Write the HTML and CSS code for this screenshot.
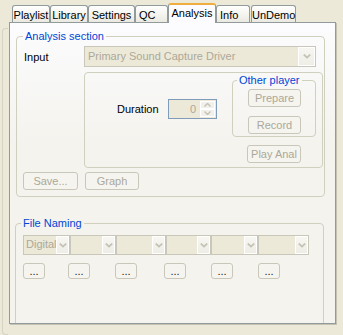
FILE: index.html
```html
<!DOCTYPE html>
<html lang="en">
<head>
<meta charset="utf-8">
<title>Analysis</title>
<link rel="stylesheet" href="styles.css">
</head>
<body>
<div class="window">
  <div class="tabs">
    <div class="tab tab-playlist">Playlist</div>
    <div class="tab tab-library">Library</div>
    <div class="tab tab-settings">Settings</div>
    <div class="tab tab-qc">QC</div>
    <div class="tab tab-analysis active">Analysis</div>
    <div class="tab tab-info">Info</div>
    <div class="tab tab-undemo">UnDemo</div>
  </div>
  <div class="panel">
    <fieldset class="group analysis">
      <legend>Analysis section</legend>
      <div class="input-row">
        <span class="input-label">Input</span>
        <div class="combo combo-input">
          <span class="combo-text">Primary Sound Capture Driver</span>
          <span class="drop drop-big"><svg width="8" height="5" viewBox="0 0 8 5"><path d="M0.8 0.6 L4 3.6 L7.2 0.6" fill="none" stroke="#c4c2b4" stroke-width="1.8"/></svg></span>
        </div>
      </div>
      <div class="inner-box">
        <div class="duration">
          <span class="duration-label">Duration</span>
          <div class="spin">
            <span class="spin-value">0</span>
            <span class="spin-buttons">
              <span class="spin-btn"><svg width="7" height="4" viewBox="0 0 7 4"><path d="M0.5 3.5 L3.5 0.5 L6.5 3.5" fill="none" stroke="#c4c2b4" stroke-width="1.4"/></svg></span>
              <span class="spin-btn"><svg width="7" height="4" viewBox="0 0 7 4"><path d="M0.5 0.5 L3.5 3.5 L6.5 0.5" fill="none" stroke="#c4c2b4" stroke-width="1.4"/></svg></span>
            </span>
          </div>
        </div>
        <div class="player-col">
          <fieldset class="group other">
            <legend>Other player</legend>
            <button class="btn btn-player btn-prepare" disabled>Prepare</button>
            <button class="btn btn-player btn-record" disabled>Record</button>
          </fieldset>
          <button class="btn btn-play" disabled>Play Anal</button>
        </div>
      </div>
      <div class="action-row">
        <button class="btn btn-save" disabled>Save...</button>
        <button class="btn btn-graph" disabled>Graph</button>
      </div>
    </fieldset>
    <fieldset class="group naming">
      <legend>File Naming</legend>
      <div class="naming-combos">
        <div class="combo combo-small"><span class="combo-text">Digital</span><span class="drop drop-small"><svg width="8" height="5" viewBox="0 0 8 5"><path d="M0.8 0.6 L4 3.6 L7.2 0.6" fill="none" stroke="#c4c2b4" stroke-width="1.8"/></svg></span></div>
        <div class="combo combo-small"><span class="combo-text"></span><span class="drop drop-small"><svg width="8" height="5" viewBox="0 0 8 5"><path d="M0.8 0.6 L4 3.6 L7.2 0.6" fill="none" stroke="#c4c2b4" stroke-width="1.8"/></svg></span></div>
        <div class="combo combo-small"><span class="combo-text"></span><span class="drop drop-small"><svg width="8" height="5" viewBox="0 0 8 5"><path d="M0.8 0.6 L4 3.6 L7.2 0.6" fill="none" stroke="#c4c2b4" stroke-width="1.8"/></svg></span></div>
        <div class="combo combo-small"><span class="combo-text"></span><span class="drop drop-small"><svg width="8" height="5" viewBox="0 0 8 5"><path d="M0.8 0.6 L4 3.6 L7.2 0.6" fill="none" stroke="#c4c2b4" stroke-width="1.8"/></svg></span></div>
        <div class="combo combo-small"><span class="combo-text"></span><span class="drop drop-small"><svg width="8" height="5" viewBox="0 0 8 5"><path d="M0.8 0.6 L4 3.6 L7.2 0.6" fill="none" stroke="#c4c2b4" stroke-width="1.8"/></svg></span></div>
        <div class="combo combo-small"><span class="combo-text"></span><span class="drop drop-small"><svg width="8" height="5" viewBox="0 0 8 5"><path d="M0.8 0.6 L4 3.6 L7.2 0.6" fill="none" stroke="#c4c2b4" stroke-width="1.8"/></svg></span></div>
      </div>
      <div class="naming-buttons">
        <button class="btn btn-dots">...</button>
        <button class="btn btn-dots">...</button>
        <button class="btn btn-dots">...</button>
        <button class="btn btn-dots">...</button>
        <button class="btn btn-dots">...</button>
        <button class="btn btn-dots">...</button>
      </div>
    </fieldset>
  </div>
</div>
</body>
</html>
```

FILE: styles.css
```css
* {
  box-sizing: border-box;
}

html, body {
  margin: 0;
  padding: 0;
}

body {
  width: 343px;
  height: 335px;
  overflow: hidden;
  position: relative;
  background: #ece9d8;
  font-family: "Liberation Sans", Arial, sans-serif;
  font-size: 11px;
  color: #000;
}

body::before {
  content: "";
  position: absolute;
  left: 2px;
  top: 28px;
  width: 5px;
  height: 305px;
  border: 1px solid #d6d3c4;
  border-right: none;
  border-radius: 4px 0 0 4px;
}

.window {
  position: relative;
  padding-left: 9px;
}

/* Tabs */
.tabs {
  position: relative;
  z-index: 2;
  display: flex;
  align-items: flex-end;
  height: 22px;
  padding-left: 3px;
}

.tab {
  height: 17px;
  padding-top: 1px;
  line-height: 16px;
  text-align: center;
  white-space: nowrap;
  border: 1px solid #919b9c;
  border-bottom: none;
  border-radius: 3px 3px 0 0;
  background: linear-gradient(#ffffff, #f3f2ec 60%, #e9e8e1);
}

.tab-playlist { width: 38px; }
.tab-library { width: 38px; }
.tab-settings { width: 47px; }
.tab-qc { width: 33px; text-align: left; padding-left: 3px; }
.tab-analysis { width: 48px; }
.tab-info { width: 34px; text-align: left; padding-left: 3px; }
.tab-undemo { width: 45px; margin-left: 1px; }

.tab.active {
  height: 20px;
  margin-bottom: -1px;
  padding-top: 0;
  border-top: 2px solid #f0ad3f;
  background: #fcfcfe;
}

/* Panel */
.panel {
  position: relative;
  z-index: 1;
  width: 327px;
  height: 302px;
  border: 1px solid #919b9c;
  box-shadow: 1px 1px 0 #c5c2b2;
  background: linear-gradient(#fcfcfe, #f4f3ee 40%, #f4f3ee);
  padding: 7px 0 0 0;
  overflow: hidden;
}

/* Group boxes */
.group {
  margin: 0;
  border: 1px solid #d0d0bf;
  border-radius: 4px;
  min-width: 0;
}

.group legend {
  padding: 0 2px;
  line-height: 13px;
  color: #0046d5;
}

.analysis {
  margin-left: 6px;
  width: 309px;
  padding: 0 1px 6px 6px;
}

.input-row {
  display: flex;
  align-items: center;
  margin-top: 3px;
  height: 21px;
}

.input-label {
  width: 61px;
  padding-left: 1px;
}

.combo {
  display: flex;
  align-items: stretch;
  border: 1px solid #c9c7ba;
  background: #ece9d8;
}

.combo-input {
  width: 232px;
  height: 21px;
}

.combo-text {
  flex: 1;
  padding-left: 3px;
  line-height: 18px;
  color: #aca899;
  white-space: nowrap;
  overflow: hidden;
}

.drop {
  display: flex;
  align-items: center;
  justify-content: center;
  border: 1px solid #ffffff;
  background: linear-gradient(#f7f6f1, #eeede6);
}

.drop-big {
  width: 17px;
}

.drop-small {
  width: 13px;
}

/* Inner box */
.inner-box {
  display: flex;
  margin-left: 61px;
  margin-top: 5px;
  width: 239px;
  height: 96px;
  border: 1px solid #d0d0bf;
  border-radius: 4px;
  padding-right: 6px;
}

.duration {
  display: flex;
  align-items: center;
  align-self: flex-start;
  margin-top: 26px;
  margin-left: 32px;
}

.duration-label {
  width: 51px;
}

.spin {
  display: flex;
  width: 49px;
  height: 20px;
  border: 1px solid #7f9db9;
  background: #ece9d8;
}

.spin-value {
  flex: 1;
  text-align: right;
  padding-right: 4px;
  line-height: 18px;
  color: #aca899;
}

.spin-buttons {
  display: flex;
  flex-direction: column;
  width: 15px;
  margin: 1px 1px 1px 0;
}

.spin-btn {
  flex: 1;
  display: flex;
  align-items: center;
  justify-content: center;
  border: 1px solid #ffffff;
  background: #f1f0ea;
}

.player-col {
  margin-left: auto;
  margin-top: 1px;
  width: 84px;
}

.other {
  width: 84px;
  padding: 0 0 2px 4px;
}

/* Buttons */
.btn {
  display: block;
  height: 18px;
  padding: 0;
  border: 1px solid #c9c7ba;
  border-radius: 3px;
  background: #f5f4ee;
  color: #aca899;
  font-family: "Liberation Sans", Arial, sans-serif;
  font-size: 11px;
  line-height: 16px;
  text-align: center;
  white-space: nowrap;
}

.btn-player {
  width: 53px;
  margin-left: 11px;
}

.btn-prepare {
  margin-top: 2px;
}

.btn-record {
  margin-top: 9px;
}

.btn-play {
  width: 54px;
  margin-left: 15px;
  margin-top: 8px;
}

.action-row {
  display: flex;
  gap: 7px;
  margin-top: 4px;
}

.btn-save {
  width: 55px;
}

.btn-graph {
  width: 54px;
}

/* File naming */
.naming {
  margin-left: 5px;
  margin-top: 20px;
  width: 309px;
  height: 140px;
  padding: 0 0 0 5px;
}

.naming-combos {
  display: grid;
  grid-template-columns: 47px 46px 50px 45px 47px 51px;
  margin-left: 2px;
  margin-top: 5px;
}

.combo-small {
  height: 20px;
}

.combo-small .combo-text {
  line-height: 17px;
  padding-left: 2px;
}

.naming-buttons {
  display: grid;
  grid-template-columns: 45px 47px 49px 47px 47px 47px;
  margin-left: 2px;
  margin-top: 8px;
}

.btn-dots {
  width: 22px;
  height: 16px;
  line-height: 14px;
  color: #222;
}
```
